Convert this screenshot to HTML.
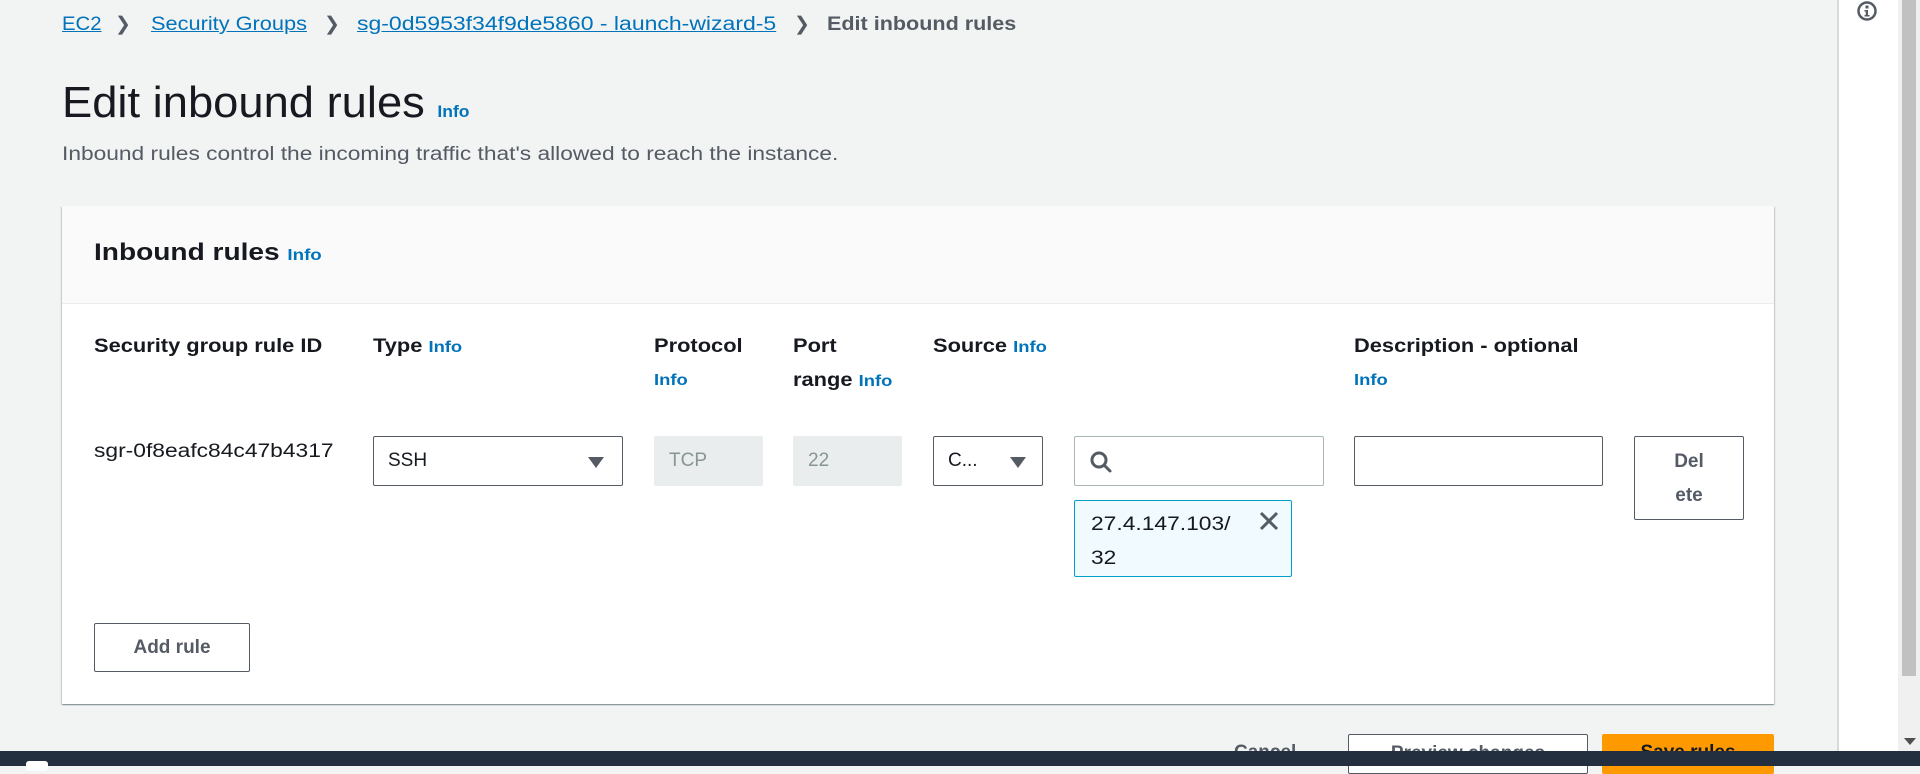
<!DOCTYPE html>
<html><head><meta charset="utf-8"><style>
*{box-sizing:border-box;margin:0;padding:0}
body{width:1920px;height:766px;overflow:hidden;background:#f2f3f3;font-family:"Liberation Sans",sans-serif;color:#16191f;position:relative}
.a{position:absolute;white-space:nowrap}
.lk{color:#0073bb;text-decoration:underline}
.info{color:#0073bb;font-weight:bold;font-size:16px}
.bc{top:14px;font-size:19px}
.ch{font-size:19px;color:#545b64}
.h{font-weight:bold;font-size:19px;transform:scaleX(1.15);transform-origin:left top}
.inp{position:absolute;border:1px solid #aab7b8;border-radius:2px;background:#fff;height:50px;top:436px}
.dis{background:#eaeded;border-color:#eaeded;color:#879596;font-size:19px;padding:13px 14px}
.sel{border-color:#545b64;font-size:19px;padding:13px 14px}
.tri{position:absolute;right:18px;top:20px;width:0;height:0;border-left:8px solid transparent;border-right:8px solid transparent;border-top:11px solid #545b64}
.btn{position:absolute;border:1px solid #545b64;border-radius:2px;background:#fff;font-weight:bold;color:#545b64;font-size:19px;text-align:center}
</style></head><body>
<div class="a bc" style="left:62px;transform:scaleX(1.07);transform-origin:left top"><span class="lk">EC2</span></div>
<div class="a ch" style="left:115px;top:13px;">&#x276F;</div>
<div class="a bc" style="left:151px;transform:scaleX(1.145);transform-origin:left top"><span class="lk">Security Groups</span></div>
<div class="a ch" style="left:324px;top:13px;">&#x276F;</div>
<div class="a bc" style="left:357px;transform:scaleX(1.21);transform-origin:left top"><span class="lk">sg-0d5953f34f9de5860 - launch-wizard-5</span></div>
<div class="a ch" style="left:794px;top:13px;">&#x276F;</div>
<div class="a bc" style="left:827px;font-weight:bold;color:#545b64;transform:scaleX(1.135);transform-origin:left top">Edit inbound rules</div>

<div class="a" style="left:62px;top:78px;font-size:44px;transform:scaleX(1.03);transform-origin:left top">Edit inbound rules <span class="info" style="font-size:17px">Info</span></div>
<div class="a" style="left:62px;top:144px;font-size:19px;color:#545b64;transform:scaleX(1.197);transform-origin:left top">Inbound rules control the incoming traffic that's allowed to reach the instance.</div>

<div class="a" style="left:62px;top:206px;width:1712px;height:498px;background:#fff;box-shadow:0 1px 1px 0 rgba(0,28,36,.3),1px 1px 1px 0 rgba(0,28,36,.15),-1px 1px 1px 0 rgba(0,28,36,.15)">
 <div style="height:98px;background:#fafafa;border-bottom:1px solid #eaeded"></div>
</div>
<div class="a" style="left:94px;top:239px;font-size:24px;font-weight:bold;transform:scaleX(1.17);transform-origin:left top">Inbound rules <span class="info">Info</span></div>

<div class="a h" style="left:94px;top:336px">Security group rule ID</div>
<div class="a h" style="left:373px;top:336px">Type <span class="info">Info</span></div>
<div class="a h" style="left:654px;top:336px">Protocol</div>
<div class="a info" style="left:654px;top:372px;transform:scaleX(1.15);transform-origin:left top">Info</div>
<div class="a h" style="left:793px;top:336px">Port</div>
<div class="a h" style="left:793px;top:370px">range <span class="info">Info</span></div>
<div class="a h" style="left:933px;top:336px">Source <span class="info">Info</span></div>
<div class="a h" style="left:1354px;top:336px">Description - optional</div>
<div class="a info" style="left:1354px;top:372px;transform:scaleX(1.15);transform-origin:left top">Info</div>

<div class="a" style="left:94px;top:441px;font-size:19px;transform:scaleX(1.2);transform-origin:left top">sgr-0f8eafc84c47b4317</div>
<div class="inp sel" style="left:373px;width:250px">SSH<div class="tri"></div></div>
<div class="inp dis" style="left:654px;width:109px">TCP</div>
<div class="inp dis" style="left:793px;width:109px">22</div>
<div class="inp sel" style="left:933px;width:110px">C...<div class="tri" style="right:16px"></div></div>
<div class="inp" style="left:1074px;width:250px">
 <svg style="position:absolute;left:14px;top:13px" width="24" height="24" viewBox="0 0 24 24"><circle cx="10" cy="10" r="7" fill="none" stroke="#545b64" stroke-width="3"/><path d="M15 15l6 6" stroke="#545b64" stroke-width="3" stroke-linecap="round"/></svg>
</div>
<div class="inp" style="left:1354px;width:249px;border-color:#545b64"></div>
<div class="btn" style="left:1634px;top:436px;width:110px;height:84px;line-height:34px;padding-top:8px">Del<br>ete</div>

<div class="a" style="left:1074px;top:500px;width:218px;height:77px;background:#f1faff;border:1px solid #00a1c9;border-radius:2px"></div>
<div class="a" style="left:1091px;top:508px;font-size:19px;line-height:34px;transform:scaleX(1.2);transform-origin:left top">27.4.147.103/<br>32</div>
<svg class="a" style="left:1258px;top:510px" width="22" height="22" viewBox="0 0 22 22"><path d="M3 3l16 16M19 3L3 19" stroke="#545b64" stroke-width="3"/></svg>

<div class="btn" style="left:94px;top:623px;width:156px;height:49px;line-height:47px">Add rule</div>

<div class="a" style="left:1234px;top:742px;font-size:19px;font-weight:bold;color:#545b64">Cancel</div>
<div class="btn" style="left:1348px;top:734px;width:240px;height:40px;line-height:38px">Preview changes</div>
<div class="a" style="left:1602px;top:734px;width:172px;height:40px;background:#ff9900;border-radius:2px;font-weight:bold;font-size:19px;text-align:center;line-height:38px">Save rules</div>

<div class="a" style="left:1837px;top:0;width:61px;height:766px;background:#fff;border-left:2px solid #d5dbdb"></div>
<svg class="a" style="left:1855px;top:0" width="24" height="24" viewBox="0 0 24 24"><circle cx="12" cy="11" r="8.5" fill="none" stroke="#545b64" stroke-width="2.5"/><rect x="10.5" y="5.5" width="3" height="3" fill="#545b64"/><path d="M9.5 10h3.5v5h1.5v1.5h-5V15h1.2v-3.5H9.5z" fill="#545b64"/></svg>
<div class="a" style="left:1898px;top:0;width:22px;height:766px;background:#f0f0f0"></div>
<div class="a" style="left:1902px;top:0;width:14px;height:676px;background:#c1c1c1"></div>
<div class="a" style="left:1904px;top:738px;width:0;height:0;border-left:6px solid transparent;border-right:6px solid transparent;border-top:7px solid #505050"></div>

<div class="a" style="left:0;top:751px;width:1920px;height:15px;background:#232f3e"></div>
<div class="a" style="left:26px;top:761px;width:22px;height:10px;background:#fff;border-radius:3px"></div>
</body></html>
